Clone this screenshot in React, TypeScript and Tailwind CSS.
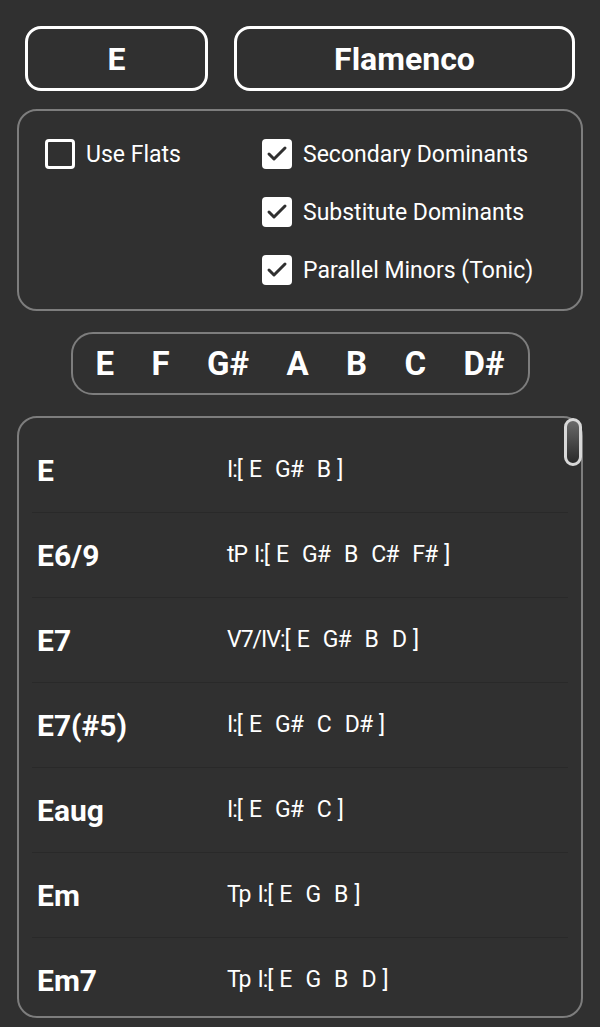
import { Check } from 'lucide-react';

const options = [
  { label: 'Secondary Dominants', checked: true },
  { label: 'Substitute Dominants', checked: true },
  { label: 'Parallel Minors (Tonic)', checked: true },
];

const notes = ['E', 'F', 'G#', 'A', 'B', 'C', 'D#'];

const chords = [
  { name: 'E', desc: 'I:[ E  G#  B ]' },
  { name: 'E6/9', desc: 'tP I:[ E  G#  B  C#  F# ]' },
  { name: 'E7', desc: 'V7/IV:[ E  G#  B  D ]' },
  { name: 'E7(#5)', desc: 'I:[ E  G#  C  D# ]' },
  { name: 'Eaug', desc: 'I:[ E  G#  C ]' },
  { name: 'Em', desc: 'Tp I:[ E  G  B ]' },
  { name: 'Em7', desc: 'Tp I:[ E  G  B  D ]' },
];

function Checkbox({ label, checked }: { label: string; checked: boolean }) {
  return (
    <div className="flex h-[30px] items-center gap-[11px]">
      {checked ? (
        <div className="flex size-[30px] items-center justify-center rounded-[4px] bg-white">
          <Check className="size-[24px] text-[#303030]" strokeWidth={3} />
        </div>
      ) : (
        <div className="size-[30px] rounded-[4px] border-[3px] border-white" />
      )}
      <span className="text-[23px] leading-none text-white">{label}</span>
    </div>
  );
}

export default function App() {
  return (
    <div
      className="flex h-[1027px] w-[600px] flex-col overflow-hidden bg-[#303030] text-white"
      style={{ fontFamily: 'Roboto, "Noto Sans", sans-serif' }}
    >
      <div className="flex gap-[26px] px-[25px] pt-[26px]">
        <button className="flex h-[65px] w-[183px] items-center justify-center rounded-[16px] border-[3px] border-white text-[32px] font-bold">
          E
        </button>
        <button className="flex h-[65px] flex-1 items-center justify-center rounded-[16px] border-[3px] border-white text-[32px] font-bold">
          Flamenco
        </button>
      </div>

      <div className="mx-[17px] mt-[18px] flex h-[202px] rounded-[20px] border-2 border-[#7d7d7d] pt-[28px] pl-[26px]">
        <div className="w-[217px]">
          <Checkbox label="Use Flats" checked={false} />
        </div>
        <div className="flex flex-col gap-[28px]">
          {options.map(o => (
            <Checkbox key={o.label} label={o.label} checked={o.checked} />
          ))}
        </div>
      </div>

      <div className="mt-[21px] flex justify-center">
        <div className="flex h-[63px] w-[459px] items-center justify-between rounded-[22px] border-2 border-[#7d7d7d] px-[23px]">
          {notes.map(n => (
            <span key={n} className="text-[33px] leading-none font-bold">
              {n}
            </span>
          ))}
        </div>
      </div>

      <div className="relative mx-[17px] mt-[21px] h-[602px] rounded-[20px] border-2 border-[#7d7d7d]">
        <div className="h-full overflow-hidden rounded-[18px] px-[13px] pt-[10px]">
          {chords.map((c, i) => (
            <div
              key={c.name}
              className={`flex h-[85px] items-center ${i < chords.length - 1 ? 'border-b border-[#292929]' : ''}`}
            >
              <span className="w-[195px] pl-[5px] text-[30px] font-bold">{c.name}</span>
              <span className="text-[23px] tracking-[-1px] [word-spacing:2.3px] whitespace-pre">
                {c.desc}
              </span>
            </div>
          ))}
        </div>
        <div className="absolute top-[0px] right-[-1px] h-[48px] w-[18px] rounded-full border-[3px] border-[#d8d8d8] bg-gradient-to-b from-[#6a6a6a] to-[#2a2a2a]" />
      </div>
    </div>
  );
}
